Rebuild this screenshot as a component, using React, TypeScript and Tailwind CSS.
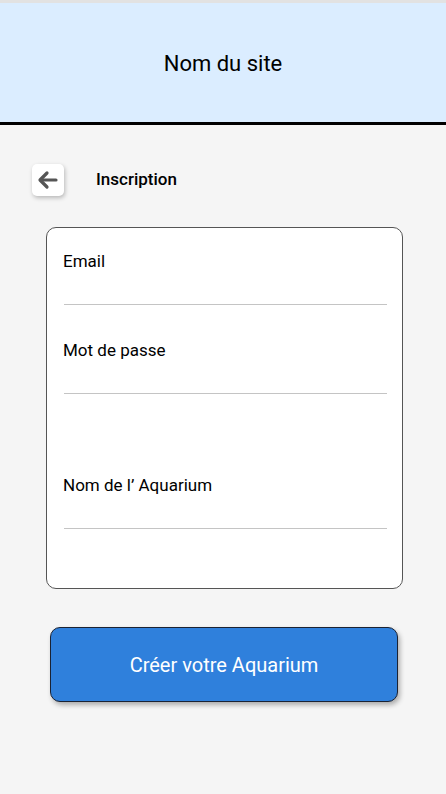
import React from 'react'

const Field = ({ label, className }: { label: string; className?: string }) => (
    <div className={className}>
        <div className="text-[17px] leading-5 text-black pl-[16px]">{label}</div>
        <div className="mt-[33px] ml-[17px] mr-[15px] h-px bg-[#c4c4c4]" />
    </div>
)

const App = () => {
    return (
        <div className="w-[446px] h-[794px] bg-[#f5f5f5] flex flex-col font-['Roboto',sans-serif] overflow-hidden">
            <div className="h-[3px] bg-[#e2e2e2]" />
            <header className="h-[122px] bg-[#dbedff] flex items-center justify-center border-b-[3px] border-black">
                <h1 className="text-[22px] text-black mt-[2px]">Nom du site</h1>
            </header>

            <div className="flex items-center mt-[39px] pl-[32px]">
                <button className="w-[32px] h-[32px] bg-white rounded-[5px] shadow-[1px_2px_4px_rgba(0,0,0,0.25)] flex items-center justify-center">
                    <svg width="24" height="24" viewBox="0 0 24 24" fill="none" stroke="#555" strokeWidth="3.2" strokeLinecap="round" strokeLinejoin="round">
                        <path d="M20 12H5" />
                        <path d="M11 5l-7 7 7 7" />
                    </svg>
                </button>
                <span className="ml-[32px] text-[17px] font-medium text-black">Inscription</span>
            </div>

            <div className="ml-[46px] mr-[43px] mt-[31px] h-[362px] bg-white border border-[#555] rounded-[10px] pt-[23px]">
                <Field label="Email" />
                <Field label="Mot de passe" className="mt-[35px]" />
                <Field label="Nom de l’ Aquarium" className="mt-[81px]" />
            </div>

            <div className="px-[50px] mt-[38px]">
                <button className="w-[348px] h-[75px] bg-[#2f80dc] border border-[#1a2233] rounded-[10px] shadow-[2px_3px_5px_rgba(0,0,0,0.3)] text-white text-[20px]">
                    Créer votre Aquarium
                </button>
            </div>
        </div>
    )
}

export default App
